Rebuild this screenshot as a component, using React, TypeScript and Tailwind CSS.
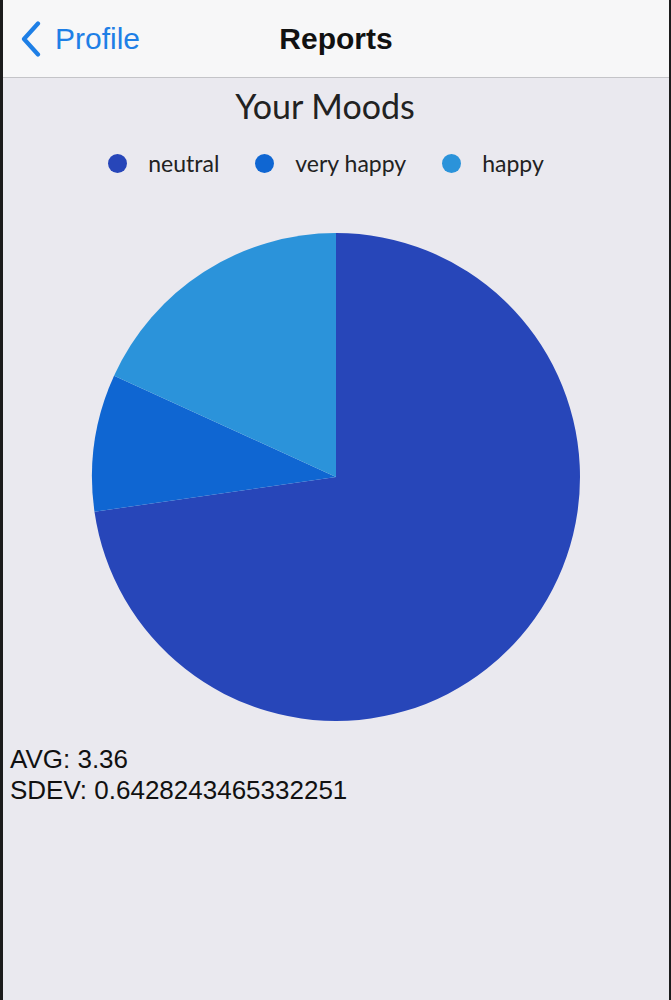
import React from "react";

const slices = [
  { label: "neutral", value: 8, color: "#2746b9" },
  { label: "very happy", value: 1, color: "#0f66d2" },
  { label: "happy", value: 2, color: "#2b93da" },
];

function Pie() {
  const cx = 333;
  const cy = 245;
  const r = 244;
  const total = slices.reduce((s, x) => s + x.value, 0);
  let start = 0;
  const paths = slices.map((s) => {
    const a0 = (start / total) * Math.PI * 2;
    start += s.value;
    const a1 = (start / total) * Math.PI * 2;
    const x0 = cx + r * Math.sin(a0);
    const y0 = cy - r * Math.cos(a0);
    const x1 = cx + r * Math.sin(a1);
    const y1 = cy - r * Math.cos(a1);
    const large = a1 - a0 > Math.PI ? 1 : 0;
    return (
      <path
        key={s.label}
        d={`M ${cx} ${cy} L ${x0} ${y0} A ${r} ${r} 0 ${large} 1 ${x1} ${y1} Z`}
        fill={s.color}
      />
    );
  });
  return (
    <svg width="666" height="490" viewBox="0 0 666 490" className="block">
      {paths}
    </svg>
  );
}

export default function App() {
  return (
    <div className="w-[671px] h-[1000px] flex flex-col border-l-[3px] border-r-[2px] border-[#1c1c1c] bg-[#eae9ef]">
      <div className="h-[78px] shrink-0 bg-[#f7f7f8] border-b border-[#c4c4c8] grid grid-cols-[1fr_auto_1fr] items-center">
        <div className="flex items-center pl-[17px] gap-[13px] text-[#1e7fe6]" style={{ fontFamily: '"Liberation Sans", Arial, sans-serif' }}>
          <svg width="22" height="36" viewBox="0 0 22 36" className="mt-[1px]">
            <path d="M18 2.5 L4 18 L18 33.5" fill="none" stroke="#1e7fe6" strokeWidth="4.2" strokeLinecap="round" strokeLinejoin="round" />
          </svg>
          <span className="text-[30px] leading-none">Profile</span>
        </div>
        <div className="text-[30px] font-bold leading-none text-[#111] pt-[1px]" style={{ fontFamily: '"Liberation Sans", Arial, sans-serif' }}>
          Reports
        </div>
        <div />
      </div>
      <div className="flex flex-col" style={{ fontFamily: 'Lato, "Open Sans", sans-serif' }}>
        <div className="text-center text-[34px] leading-none text-[#222] pt-[11px] pr-[22px]">Your Moods</div>
        <div className="flex justify-center items-center mt-[29px] gap-[36px] text-[23px] leading-none text-[#222] pr-[20px]">
          {slices.map((s) => (
            <div key={s.label} className="flex items-center gap-[21px]">
              <span className="w-[19px] h-[19px] rounded-full" style={{ backgroundColor: s.color }} />
              <span>{s.label}</span>
            </div>
          ))}
        </div>
        <div className="mt-[57px]">
          <Pie />
        </div>
        <div className="pl-[7px] mt-[22px] text-[26px] leading-[31px] text-[#111]" style={{ fontFamily: '"Liberation Sans", Arial, sans-serif' }}>
          <div>AVG: 3.36</div>
          <div>SDEV: 0.6428243465332251</div>
        </div>
      </div>
    </div>
  );
}
